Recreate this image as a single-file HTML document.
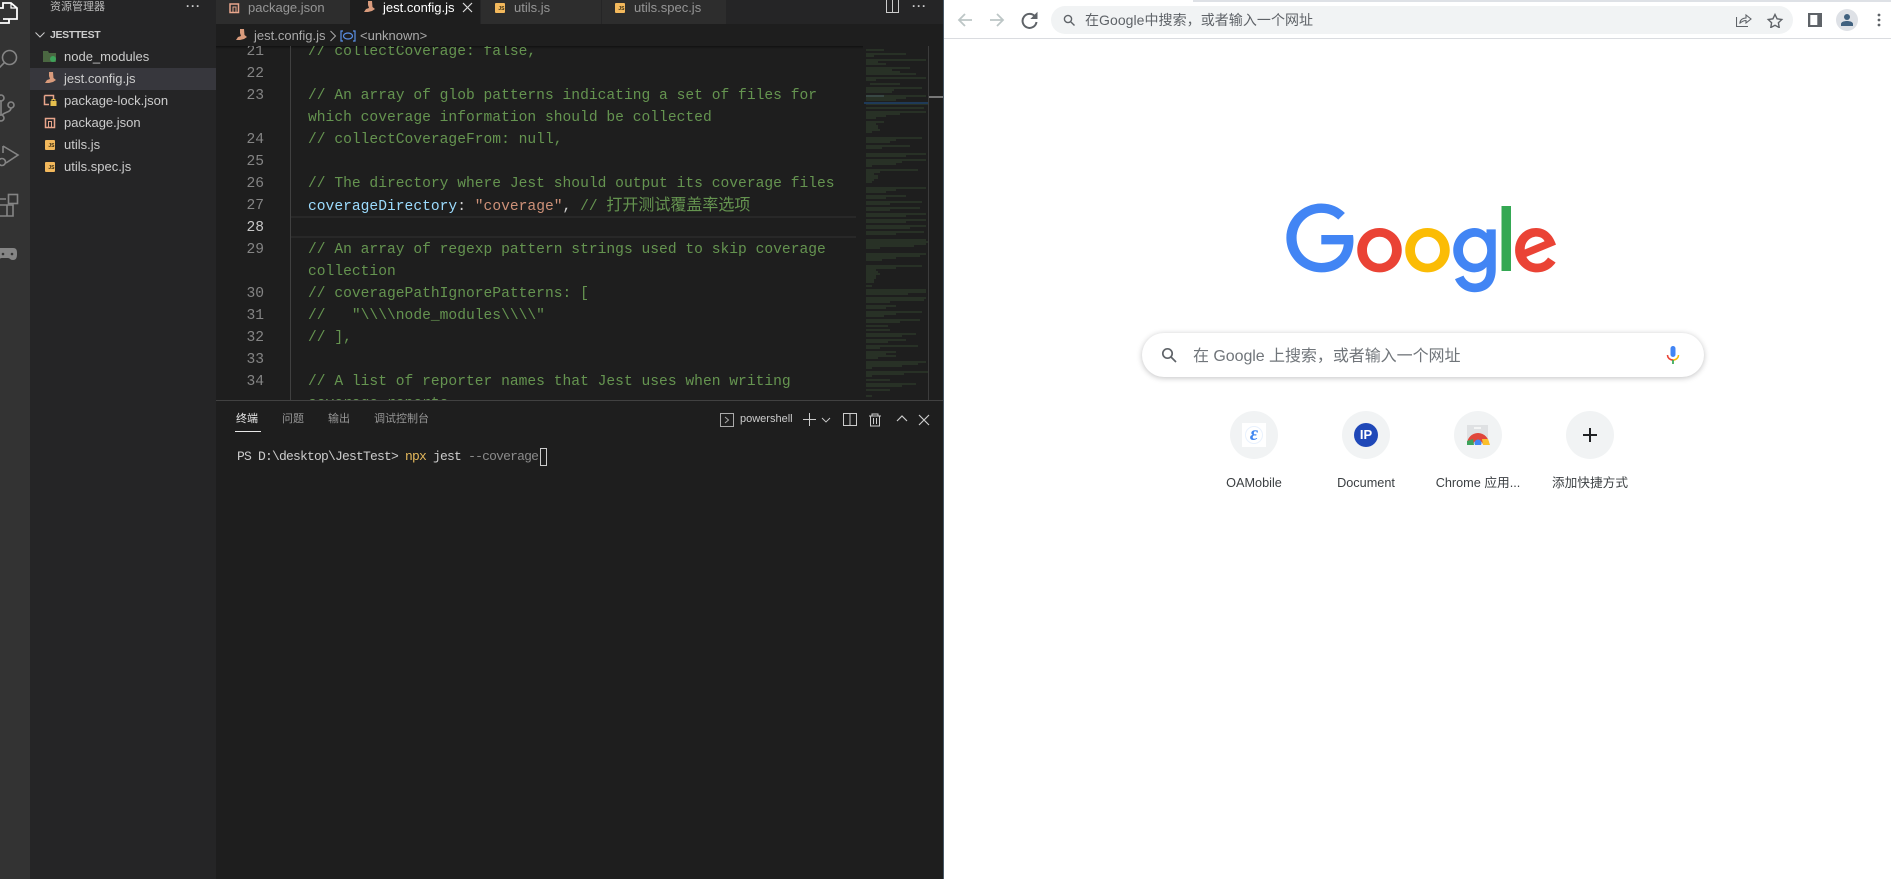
<!DOCTYPE html>
<html><head><meta charset="utf-8"><style>
html,body{margin:0;padding:0;width:1891px;height:879px;overflow:hidden;background:#fff}
*{box-sizing:border-box}
.a{position:absolute;white-space:pre}
body{font-family:"Liberation Sans","Noto Sans CJK SC",sans-serif}
.f{font-size:13px;color:#ccc;left:64px;line-height:22px;height:22px}
.t{font-size:13px;line-height:24px;top:-4px}
.ln{font-family:"Liberation Mono",monospace;font-size:14.6px;line-height:22px;color:#858585;left:216px;width:48px;text-align:right}
.c{font-family:"Liberation Mono","Noto Sans CJK SC",monospace;font-size:14.63px;line-height:22px;left:308px;color:#659450}
.p{font-size:11px;line-height:16px;top:411px;color:#969696}
.js{position:absolute;width:10px;height:10px;background:#f2b85c;border-radius:1px;color:#3a2c10;font:bold 5px/5px "Liberation Sans",sans-serif;text-align:right;padding:4px .5px 0 0}
.tile{position:absolute;top:411px;width:48px;height:48px;border-radius:50%;background:#f1f3f4}
.tl{position:absolute;top:474px;font-size:12.7px;line-height:18px;color:#3c4043;text-align:center;width:112px}
</style></head><body>

<!-- VS Code background regions -->
<div class="a" style="left:0;top:0;width:30px;height:879px;background:#333"></div>
<div class="a" style="left:30px;top:0;width:186px;height:879px;background:#252526"></div>
<div class="a" style="left:216px;top:0;width:727px;height:879px;background:#1e1e1e"></div>
<div class="a" style="left:216px;top:0;width:727px;height:24px;background:#252526"></div>
<div class="a" style="left:216px;top:0;width:134px;height:24px;background:#2d2d2d"></div>
<div class="a" style="left:350px;top:0;width:130px;height:24px;background:#1e1e1e"></div>
<div class="a" style="left:481px;top:0;width:120px;height:24px;background:#2d2d2d"></div>
<div class="a" style="left:602px;top:0;width:124px;height:24px;background:#2d2d2d"></div>
<div class="a" style="left:216px;top:46px;width:647px;height:3px;background:linear-gradient(#111,#1e1e1e)"></div>

<!-- Activity bar -->
<svg class="a" style="left:0;top:0" width="30" height="280" fill="none" stroke="#858585" stroke-width="1.6">
<path d="M-2 8H3V3H11L17 8V19H3M-2 23H9V19" stroke="#fff" stroke-width="1.8"/>
<path d="M11 3V8H17" stroke="#fff" stroke-width="1.2"/>
<circle cx="9.500" cy="57.500" r="7"/><path d="M4.500 62.500L-1 68"/>
<circle cx="11" cy="105" r="3"/><circle cx="1" cy="98" r="3"/><circle cx="1" cy="118" r="3"/><path d="M1 101V115M11 108C11 112 5 112 2 115"/>
<path d="M3 146L18 155L6 163M3 146V153"/><circle cx="2" cy="162" r="3.500"/>
<rect x="8.500" y="194.500" width="9" height="9"/><path d="M-1 205H13V216H-1M7 205V216M-1 199H6"/>
<path d="M4 248H13C17 248 17 251 17 254C17 258 16 260 13 260C10 260 10 258 8 258H2C0 258-1 260-3 260V248Z" fill="#858585" stroke="none"/>
<circle cx="12" cy="254" r="1.300" fill="#333" stroke="none"/><circle cx="3" cy="254" r="1.300" fill="#333" stroke="none"/>
</svg>

<!-- Sidebar -->
<div class="a" style="left:50px;top:-1px;font-size:11px;line-height:16px;color:#bbb">资源管理器</div>
<div class="a" style="left:186px;top:0;font-size:12px;line-height:12px;color:#ccc;font-weight:bold;letter-spacing:1px">···</div>
<svg class="a" style="left:34px;top:29px" width="12" height="12" fill="none" stroke="#ccc" stroke-width="1"><path d="M1.500 3.500L6 8L10.500 3.500"/></svg>
<div class="a" style="left:50px;top:27px;font-size:10.5px;line-height:16px;font-weight:bold;color:#ccc;letter-spacing:-.35px">JESTTEST</div>
<div class="a" style="left:30px;top:68px;width:186px;height:22px;background:#37373d"></div>
<div class="a f" style="top:46px">node_modules</div>
<div class="a f" style="top:68px">jest.config.js</div>
<div class="a f" style="top:90px">package-lock.json</div>
<div class="a f" style="top:112px">package.json</div>
<div class="a f" style="top:134px">utils.js</div>
<div class="a f" style="top:156px">utils.spec.js</div>
<svg class="a" style="left:42px;top:48px" width="18" height="130" fill="none">
<path d="M1 3H6L7 5H14V14H1Z" fill="#4a6741"/><circle cx="11" cy="11" r="3" fill="#3da35a"/>
<path d="M7 24L11 24L11.500 30L14 32L11 34L7 35L3 35L5 32L8 31L7 28Z" fill="#d99b7c"/>
<path d="M2.500 47.500H11.500V51M2.500 47.500V56.500H7" stroke="#e8a58b" stroke-width="1.500"/><rect x="8.500" y="53" width="6" height="5" fill="#e7c04e"/><path d="M10 53V51.500H13V53" stroke="#e7c04e"/>
<rect x="3.500" y="70.500" width="9" height="9" stroke="#e8a58b" stroke-width="1.500"/><path d="M6.500 79V73.500H9.500V79" stroke="#e8a58b"/>
</svg>
<div class="js" style="left:45px;top:140px">JS</div>
<div class="js" style="left:45px;top:162px">JS</div>

<!-- Tabs -->
<svg class="a" style="left:229px;top:3px" width="11" height="11" fill="none"><rect x="1" y="1" width="8.500" height="8.500" stroke="#e8a58b" stroke-width="1.500"/><path d="M4 9V4H7V9" stroke="#e8a58b"/></svg>
<div class="a t" style="left:248px;color:#969696">package.json</div>
<svg class="a" style="left:362px;top:1px" width="14" height="13"><path d="M6 0L10 0L10.500 6L13 8L10 10L6 11L2 11L4 8L7 7L6 4Z" fill="#d99b7c"/></svg>
<div class="a t" style="left:383px;color:#fff">jest.config.js</div>
<svg class="a" style="left:462px;top:2px" width="11" height="11" stroke="#ddd" stroke-width="1.200"><path d="M1 1L10 10M10 1L1 10"/></svg>
<div class="js" style="left:495px;top:3px">JS</div>
<div class="a t" style="left:514px;color:#969696">utils.js</div>
<div class="js" style="left:615px;top:3px">JS</div>
<div class="a t" style="left:634px;color:#969696">utils.spec.js</div>
<svg class="a" style="left:886px;top:0" width="14" height="13" fill="none" stroke="#ccc" stroke-width="1"><path d="M.5-2V12.500H12.500V-2M6.500-2V12.500"/></svg>
<div class="a" style="left:912px;top:0;font-size:12px;line-height:12px;color:#ccc;font-weight:bold;letter-spacing:1px">···</div>

<!-- Breadcrumb -->
<svg class="a" style="left:234px;top:29px" width="14" height="13"><path d="M6 0L10 0L10.500 6L13 8L10 10L6 11L2 11L4 8L7 7L6 4Z" fill="#d99b7c"/></svg>
<div class="a" style="left:254px;top:25px;font-size:13px;line-height:22px;color:#a9a9a9">jest.config.js</div>
<svg class="a" style="left:329px;top:30px" width="8" height="12" fill="none" stroke="#a9a9a9"><path d="M1.500 1L6.500 6L1.500 11"/></svg>
<svg class="a" style="left:340px;top:30px" width="16" height="12" fill="none" stroke="#5a8fe6" stroke-width="1.200"><path d="M3 1H1V11H3M13 1H15V11H13"/><ellipse cx="8" cy="6" rx="4.500" ry="3"/></svg>
<div class="a" style="left:360px;top:25px;font-size:13px;line-height:22px;color:#a9a9a9">&lt;unknown&gt;</div>

<!-- Editor -->
<div class="a" style="left:216px;top:46px;width:727px;height:354px;overflow:hidden">
<div style="position:absolute;left:-216px;top:-45px;width:943px;height:420px">
<div class="a" style="left:290px;top:40px;width:1px;height:380px;background:#404040"></div>
<div class="a" style="left:291px;top:215px;width:565px;height:22px;border-top:2px solid #282828;border-bottom:2px solid #282828"></div>
<div class="a ln" style="top:40px">21</div><div class="a c" style="top:40px">// collectCoverage: false,</div>
<div class="a ln" style="top:62px">22</div>
<div class="a ln" style="top:84px">23</div><div class="a c" style="top:84px">// An array of glob patterns indicating a set of files for</div>
<div class="a c" style="top:106px">which coverage information should be collected</div>
<div class="a ln" style="top:128px">24</div><div class="a c" style="top:128px">// collectCoverageFrom: null,</div>
<div class="a ln" style="top:150px">25</div>
<div class="a ln" style="top:172px">26</div><div class="a c" style="top:172px">// The directory where Jest should output its coverage files</div>
<div class="a ln" style="top:194px">27</div><div class="a c" style="top:194px"><span style="color:#9cdcfe">coverageDirectory</span><span style="color:#d4d4d4">: </span><span style="color:#ce9178">"coverage"</span><span style="color:#d4d4d4">,</span> // <span style="font-size:16px">打开测试覆盖率选项</span></div>
<div class="a ln" style="top:216px;color:#c6c6c6">28</div>
<div class="a ln" style="top:238px">29</div><div class="a c" style="top:238px">// An array of regexp pattern strings used to skip coverage</div>
<div class="a c" style="top:260px">collection</div>
<div class="a ln" style="top:282px">30</div><div class="a c" style="top:282px">// coveragePathIgnorePatterns: [</div>
<div class="a ln" style="top:304px">31</div><div class="a c" style="top:304px">//   "\\\\node_modules\\\\"</div>
<div class="a ln" style="top:326px">32</div><div class="a c" style="top:326px">// ],</div>
<div class="a ln" style="top:348px">33</div>
<div class="a ln" style="top:370px">34</div><div class="a c" style="top:370px">// A list of reporter names that Jest uses when writing</div>
<div class="a c" style="top:392px">coverage reports</div>
</div></div>

<!-- Minimap -->
<svg class="a" style="left:864px;top:46px" width="79" height="354" fill="none">
<path stroke="#3a5233" stroke-width=".8" d="M2 4h18M2 8h40M2 10h8M2 14h60M2 16h12M2 18h20M2 22h44M2 24h26M2 26h34M2 28h50M2 32h60M2 34h10M6 38h30M2 42h56M2 44h28M2 46h26M2 50h60M2 52h40M2 54h30M2 58h62M2 62h58M2 66h60M2 68h34M2 70h20M2 72h10M2 76h18M2 78h10M2 80h12M2 82h12M2 84h14M2 86h6M2 92h56M2 94h30M2 96h24M2 100h44M2 102h16M2 108h60M2 110h40M2 114h60M2 116h36M2 118h30M2 120h6M2 124h52M2 126h14M2 128h8M2 130h12M2 132h12M2 134h8M2 136h6M2 142h60M2 144h30M2 146h20M2 150h40M2 152h20M2 156h56M2 158h24M2 162h54M2 164h24M2 168h60M2 170h40M2 174h60M2 176h40M2 180h60M2 182h44M2 186h58M2 188h30M2 194h60M2 196h62M2 198h60M2 200h48M2 202h14M2 208h60M2 210h54M2 212h30M2 214h16M2 220h56M2 222h30M2 224h10M2 226h12M2 228h14M2 230h10M2 232h10M2 234h8M2 236h8M2 240h6M2 244h60M2 246h60M2 248h42M2 252h60M2 254h58M2 256h24M2 260h30M2 262h20M2 266h56M2 268h30M2 270h18M2 274h54M2 276h34M2 280h22M2 284h24M2 288h50M2 290h36M2 294h40M2 296h22M2 300h52M2 302h14M2 306h30M2 308h20M2 310h30M2 312h12M2 316h60M2 318h52M2 320h36M2 322h6M2 326h62M2 328h38M2 330h6M2 334h24M2 338h50M2 340h36M2 344h24M2 350h6"/>
<path stroke="#1f3a58" stroke-width="2" d="M0 57h64"/>
<path stroke="#9cdcfe" stroke-opacity=".4" stroke-width=".8" d="M2 50h18"/>
<path stroke="#3c3c3c" d="M64.500 0V354"/>
<rect x="65" y="50" width="14" height="2" fill="#777"/>
</svg>

<!-- Panel -->
<div class="a" style="left:216px;top:400px;width:727px;height:1px;background:#414141"></div>
<div class="a p" style="left:236px;color:#e7e7e7">终端</div>
<div class="a" style="left:235px;top:431px;width:26px;height:1px;background:#e7e7e7"></div>
<div class="a p" style="left:282px">问题</div>
<div class="a p" style="left:328px">输出</div>
<div class="a p" style="left:374px">调试控制台</div>
<svg class="a" style="left:720px;top:410px" width="14" height="18" fill="none" stroke="#aaa"><rect x=".5" y="3.500" width="13" height="13"/><path d="M5 7L8.500 10L5 13"/></svg>
<div class="a" style="left:740px;top:411px;font-size:11px;line-height:16px;color:#ccc">powershell</div>
<svg class="a" style="left:800px;top:410px" width="140" height="18" fill="none" stroke="#ccc">
<path d="M9.500 3V16M3 9.500H16"/><path d="M22 8L26 12L30 8" stroke-width=".9"/>
<rect x="43.500" y="3.500" width="13" height="12"/><path d="M50 3.500V15.500"/>
<path d="M69 6H81M72 6V4H78V6M70.500 6V16H79.500V6M73.500 8V14M76.500 8V14"/>
<path d="M97 11L102 6L107 11" stroke-width="1.200"/><path d="M119 5L129 15M129 5L119 15" stroke-width="1.200"/>
</svg>

<!-- Terminal -->
<div class="a" style="left:237px;top:448px;font-family:'Liberation Mono',monospace;font-size:13px;letter-spacing:-.8px;line-height:18px;color:#ccc">PS D:\desktop\JestTest&gt; <span style="color:#e5b95c">npx</span> jest <span style="color:#8a8a8a">--coverage</span></div>
<div class="a" style="left:540px;top:448px;width:7px;height:18px;border:1px solid #ccc"></div>

<!-- Chrome -->
<div class="a" style="left:943px;top:0;width:948px;height:879px;background:#fff;border-left:1px solid #4a5a68"></div>
<div class="a" style="left:1193px;top:0;width:698px;height:2px;background:#dee1e6"></div>
<div class="a" style="left:944px;top:38px;width:947px;height:1px;background:#dadce0"></div>
<svg class="a" style="left:956px;top:11px" width="90" height="18" fill="none" stroke-width="1.800">
<path d="M16 9H3M9 3L3 9L9 15" stroke="#bdc6c6"/>
<path d="M34 9H47M41 3L47 9L41 15" stroke="#bdc6c6"/>
<g transform="translate(-7 0)"><path d="M86 5.500A7 7 0 1 0 87.500 11" stroke="#5f6368" stroke-width="2"/><path d="M88 2V7.500H82.500Z" fill="#5f6368" stroke="#5f6368" stroke-width="1"/></g>
</svg>
<div class="a" style="left:1051px;top:6px;width:742px;height:28px;border-radius:14px;background:#f1f3f4"></div>
<svg class="a" style="left:1063px;top:14px" width="13" height="13" fill="none" stroke="#5f6368" stroke-width="1.400"><circle cx="5" cy="5" r="3.600"/><path d="M7.700 7.700L11.500 11.500"/></svg>
<div class="a" style="left:1085px;top:10px;font-size:14px;letter-spacing:.05px;line-height:20px;color:#5f6368">在Google中搜索，或者输入一个网址</div>
<svg class="a" style="left:1736px;top:13px" width="50" height="15" fill="none" stroke="#5f6368" stroke-width="1.100">
<path d="M.5 4V13.500H12M4 10C4 7 6.500 5 10 5V2L15 6L10 10V7.500C8 7.500 6 8.500 4 10Z"/>
<path d="M39 1.500L41.100 5.800L45.800 6.500L42.400 9.800L43.200 14.500L39 12.300L34.800 14.500L35.600 9.800L32.200 6.500L36.900 5.800Z" stroke-width="1.400"/>
</svg>
<svg class="a" style="left:1808px;top:13px" width="14" height="14"><rect width="14" height="14" fill="#5f6368"/><rect x="2.300" y="2" width="7" height="10" fill="#fff"/></svg>
<div class="a" style="left:1836px;top:9px;width:22px;height:22px;border-radius:50%;background:#dee1e6"></div>
<svg class="a" style="left:1840px;top:13px" width="14" height="14" fill="#40617f"><circle cx="7" cy="4" r="3"/><path d="M1 13V11C1 9 4 8 7 8S13 9 13 11V13Z"/></svg>
<svg class="a" style="left:1876px;top:13px" width="6" height="16" fill="#5f6368"><circle cx="3" cy="2" r="1.400"/><circle cx="3" cy="7" r="1.400"/><circle cx="3" cy="12" r="1.400"/></svg>

<!-- Google logo -->
<svg class="a" style="left:1286px;top:203px" width="272" height="92" viewBox="0 0 272 92">
<path fill="#EA4335" d="M115.750 47.180c0 12.770-9.990 22.180-22.250 22.180s-22.250-9.410-22.250-22.180C71.250 34.320 81.240 25 93.500 25s22.250 9.320 22.250 22.180zm-9.740 0c0-7.980-5.790-13.440-12.510-13.440S80.990 39.200 80.990 47.180c0 7.900 5.790 13.440 12.510 13.440s12.510-5.550 12.510-13.440z"/>
<path fill="#FBBC05" d="M163.750 47.180c0 12.770-9.990 22.180-22.250 22.180s-22.250-9.410-22.250-22.180c0-12.850 9.990-22.180 22.250-22.180s22.250 9.320 22.250 22.180zm-9.740 0c0-7.980-5.790-13.440-12.510-13.440s-12.510 5.460-12.510 13.440c0 7.900 5.790 13.440 12.510 13.440s12.510-5.550 12.510-13.440z"/>
<path fill="#4285F4" d="M209.750 26.340v39.820c0 16.380-9.660 23.070-21.080 23.070-10.750 0-17.220-7.190-19.660-13.070l8.480-3.530c1.510 3.610 5.210 7.870 11.170 7.870 7.310 0 11.840-4.510 11.840-13v-3.190h-.34c-2.180 2.690-6.380 5.040-11.680 5.040-11.090 0-21.250-9.660-21.250-22.090 0-12.520 10.160-22.260 21.250-22.260 5.290 0 9.490 2.350 11.680 4.960h.34v-3.610h9.250zm-8.560 20.920c0-7.810-5.210-13.520-11.840-13.520-6.720 0-12.350 5.710-12.350 13.520 0 7.730 5.630 13.360 12.350 13.360 6.630 0 11.840-5.630 11.840-13.360z"/>
<path fill="#34A853" d="M225 3v65h-9.500V3h9.500z"/>
<path fill="#EA4335" d="M262.020 54.480l7.560 5.040c-2.440 3.610-8.320 9.830-18.480 9.830-12.600 0-22.010-9.740-22.010-22.180 0-13.190 9.490-22.180 20.920-22.180 11.510 0 17.140 9.160 18.980 14.110l1.010 2.520-29.650 12.280c2.270 4.450 5.800 6.720 10.750 6.720 4.960 0 8.400-2.440 10.920-6.140zm-23.270-7.980l19.820-8.230c-1.090-2.770-4.370-4.700-8.230-4.700-4.950 0-11.840 4.370-11.590 12.930z"/>
<path fill="#4285F4" d="M35.290 41.410V32H67c.31 1.640.47 3.580.47 5.680 0 7.060-1.930 15.790-8.150 22.010-6.050 6.300-13.780 9.660-24.020 9.660C16.320 69.350.36 53.890.36 34.91.36 15.930 16.320.47 35.300.47c10.500 0 17.980 4.120 23.600 9.490l-6.640 6.640c-4.030-3.780-9.490-6.720-16.970-6.720-13.860 0-24.700 11.170-24.700 25.030 0 13.860 10.840 25.030 24.700 25.030 8.990 0 14.110-3.610 17.390-6.890 2.660-2.660 4.410-6.460 5.100-11.650l-22.490.01z"/>
</svg>

<!-- Search box -->
<div class="a" style="left:1142px;top:333px;width:562px;height:44px;border-radius:22px;background:#fff;box-shadow:0 1px 6px rgba(32,33,36,.28)"></div>
<svg class="a" style="left:1161px;top:347px" width="16" height="16" fill="none" stroke="#5f6368" stroke-width="1.700"><circle cx="6.500" cy="6.500" r="4.700"/><path d="M10 10L15 15"/></svg>
<div class="a" style="left:1193px;top:346px;font-size:16px;line-height:22px;color:#70757a;letter-spacing:-.05px">在 Google 上搜索，或者输入一个网址</div>
<svg class="a" style="left:1665px;top:345px" width="16" height="20" fill="none">
<rect x="5.500" y="1" width="5" height="11" rx="2.500" fill="#4285f4"/>
<path d="M2.500 10C2.500 13 5 15 8 15" stroke="#ea4335" stroke-width="1.500"/><path d="M13.500 10C13.500 13 11 15 8 15" stroke="#fbbc05" stroke-width="1.500"/>
<path d="M8 15V19" stroke="#34a853" stroke-width="1.700"/>
</svg>

<!-- Tiles -->
<div class="tile" style="left:1230px"></div>
<div class="a" style="left:1242px;top:423px;width:24px;height:24px;background:#fff"></div>
<div class="a" style="left:1245px;top:426px;width:18px;height:18px;border-radius:50%;border:1px solid #e8f1fd"></div>
<div class="a" style="left:1242px;top:423px;width:24px;height:24px;text-align:center;font:italic bold 20px/23px 'Liberation Serif',serif;color:#3f86f0">ε</div>
<div class="tile" style="left:1342px"></div>
<div class="a" style="left:1354px;top:423px;width:24px;height:24px;border-radius:50%;background:#1f48b8;color:#fff;font:bold 13px/24px 'Liberation Sans',sans-serif;text-align:center">IP</div>
<div class="tile" style="left:1454px"></div>
<svg class="a" style="left:1466px;top:423px" width="24" height="24">
<rect x="1" y="2" width="21" height="19" fill="#dfe1e3"/><rect x="8" y="4" width="7" height="2" fill="#f4f5f5"/>
<path d="M1 21A11 11 0 0 1 23 21H17A5.500 5.500 0 0 0 7 21Z" fill="#e0463a"/>
<path d="M1 18L7 16L8 22H1Z" fill="#3da35a"/><path d="M16 16H22L24 22H17Z" fill="#fbc02d"/>
<circle cx="12" cy="20" r="3.500" fill="#4285f4"/><rect x="0" y="22" width="24" height="2" fill="#f1f3f4"/>
</svg>
<div class="tile" style="left:1566px"></div>
<svg class="a" style="left:1583px;top:428px" width="14" height="14" stroke="#202124" stroke-width="2"><path d="M7 0V14M0 7H14"/></svg>
<div class="tl" style="left:1198px">OAMobile</div>
<div class="tl" style="left:1310px">Document</div>
<div class="tl" style="left:1422px">Chrome 应用...</div>
<div class="tl" style="left:1534px">添加快捷方式</div>
</body></html>
